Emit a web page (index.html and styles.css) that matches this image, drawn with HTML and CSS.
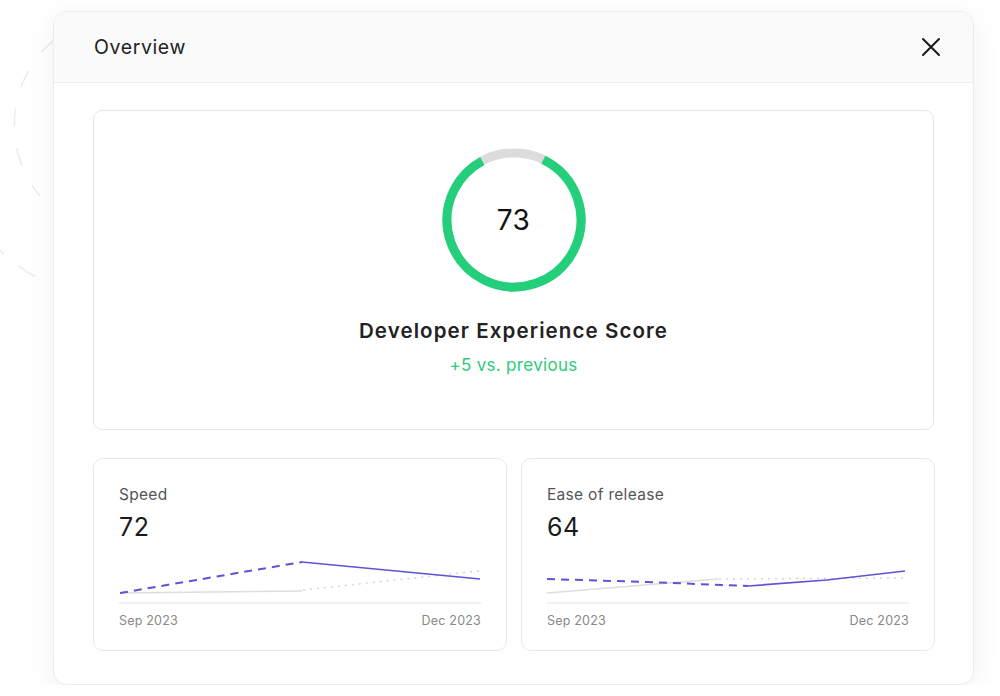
FILE: index.html
```html
<!DOCTYPE html>
<html lang="en">
<head>
<meta charset="utf-8">
<title>Overview</title>
<link rel="stylesheet" href="styles.css">
</head>
<body>
<svg class="backdrop" width="1000" height="696" viewBox="0 0 1000 696" aria-hidden="true">
  <path d="M54 40 A111 111 0 0 0 40 196" fill="none" stroke="#ebebeb" stroke-width="1.5" stroke-dasharray="18 22"/>
  <path d="M-10 240 A176 176 0 0 0 50 284" fill="none" stroke="#ebebeb" stroke-width="1.5" stroke-dasharray="20 18"/>
</svg>
<div class="stage">
  <section class="modal">
    <header class="modal-header">
      <h1 class="modal-title">Overview</h1>
      <button class="close" aria-label="Close">
        <svg width="20" height="20" viewBox="0 0 20 20"><path d="M2 2 L18 18 M18 2 L2 18" stroke="#1a1a1a" stroke-width="2" stroke-linecap="round"/></svg>
      </button>
    </header>
    <div class="modal-body">
      <div class="score-card">
        <div class="gauge">
          <svg width="144" height="144" viewBox="0 0 144 144">
            <circle cx="72" cy="72" r="67" fill="none" stroke="#dcdcdc" stroke-width="9"/>
            <circle cx="72" cy="72" r="67" fill="none" stroke="#23cf7a" stroke-width="9" stroke-dasharray="357 64" transform="rotate(-64 72 72)"/>
          </svg>
          <span class="gauge-value">73</span>
        </div>
        <h2 class="score-title">Developer Experience Score</h2>
        <p class="score-delta">+5 vs. previous</p>
      </div>
      <div class="metrics">
        <div class="metric">
          <div class="metric-label">Speed</div>
          <div class="metric-value">72</div>
          <svg class="spark" width="362" height="50" viewBox="0 0 362 50">
            <line x1="0" y1="48" x2="362" y2="48" stroke="#ebebeb" stroke-width="1.5"/>
            <polyline points="1,38 183,36" fill="none" stroke="#dddddd" stroke-width="1.5"/>
            <polyline points="184,35 361,16" fill="none" stroke="#d4d4d4" stroke-width="1.5" stroke-dasharray="2 5"/>
            <polyline points="1,38 183,7" fill="none" stroke="#5e53d4" stroke-width="2" stroke-dasharray="8 6"/>
            <polyline points="183,7 361,24" fill="none" stroke="#5e53d4" stroke-width="1.7"/>
          </svg>
          <div class="axis"><span>Sep 2023</span><span>Dec 2023</span></div>
        </div>
        <div class="metric">
          <div class="metric-label">Ease of release</div>
          <div class="metric-value">64</div>
          <svg class="spark" width="362" height="50" viewBox="0 0 362 50">
            <line x1="0" y1="48" x2="362" y2="48" stroke="#ebebeb" stroke-width="1.5"/>
            <polyline points="0,38 171,24" fill="none" stroke="#dddddd" stroke-width="1.5"/>
            <polyline points="172,24 358,23" fill="none" stroke="#d4d4d4" stroke-width="1.5" stroke-dasharray="2 5"/>
            <polyline points="0,24 100,27 201,31" fill="none" stroke="#5e53d4" stroke-width="2" stroke-dasharray="8 6"/>
            <polyline points="201,31 280,25 358,16" fill="none" stroke="#5e53d4" stroke-width="1.7"/>
          </svg>
          <div class="axis"><span>Sep 2023</span><span>Dec 2023</span></div>
        </div>
      </div>
    </div>
  </section>
</div>
</body>
</html>
```
FILE: styles.css
```css
* { box-sizing: border-box; }
html, body {
  margin: 0;
  padding: 0;
  background: #ffffff;
  font-family: Inter, "Noto Sans", "Liberation Sans", sans-serif;
  color: #1c1c1c;
}
.backdrop {
  position: absolute;
  left: 0;
  top: 0;
  z-index: 0;
}
.stage {
  position: relative;
  z-index: 1;
  padding: 11px 0 0 53px;
}
.modal {
  width: 921px;
  height: 674px;
  background: #ffffff;
  border: 1px solid #ececec;
  border-radius: 14px;
  box-shadow: 0 6px 30px rgba(0, 0, 0, 0.06);
  overflow: hidden;
  display: flex;
  flex-direction: column;
}
.modal-header {
  height: 71px;
  flex: none;
  background: #fafafa;
  border-bottom: 1.5px solid #ececec;
  display: flex;
  align-items: center;
  justify-content: space-between;
  padding: 0 32px 0 40px;
}
.modal-title {
  margin: 0;
  font-size: 19.5px;
  font-weight: 400;
  color: #222;
  letter-spacing: 0.6px;
}
.close {
  border: 0;
  background: none;
  padding: 0;
  width: 20px;
  height: 20px;
  display: flex;
  align-items: center;
  justify-content: center;
}
.modal-body {
  padding: 27px 39px 0 39px;
  display: flex;
  flex-direction: column;
  gap: 28px;
}
.score-card {
  height: 320px;
  border: 1px solid #e6e6e6;
  border-radius: 9px;
  display: flex;
  flex-direction: column;
  align-items: center;
  padding-top: 37px;
}
.gauge {
  position: relative;
  width: 144px;
  height: 144px;
}
.gauge svg { display: block; }
.gauge-value {
  position: absolute;
  inset: 0;
  display: flex;
  align-items: center;
  justify-content: center;
  font-size: 28px;
  font-weight: 400;
  color: #111;
  letter-spacing: 0.5px;
}
.score-title {
  margin: 27px 0 0 0;
  font-size: 20.5px;
  line-height: 24px;
  font-weight: 600;
  color: #222;
  letter-spacing: 1.1px;
}
.score-delta {
  margin: 12px 0 0 0;
  font-size: 17px;
  line-height: 20px;
  color: #2ccb77;
  letter-spacing: 0.3px;
}
.metrics {
  display: grid;
  grid-template-columns: 1fr 1fr;
  gap: 14px;
}
.metric {
  height: 193px;
  border: 1px solid #e8e8e8;
  border-radius: 10px;
  padding: 26px 25px 0 25px;
  display: flex;
  flex-direction: column;
}
.metric-label {
  font-size: 15.5px;
  line-height: 20px;
  color: #555;
  letter-spacing: 0.3px;
}
.metric-value {
  margin-top: 7px;
  font-size: 25px;
  line-height: 30px;
  color: #1a1a1a;
  letter-spacing: 0.5px;
}
.spark {
  display: block;
  margin-top: 13px;
}
.axis {
  margin-top: 8px;
  display: flex;
  justify-content: space-between;
  font-size: 12.5px;
  line-height: 16px;
  color: #888;
  letter-spacing: 0.2px;
}
```
